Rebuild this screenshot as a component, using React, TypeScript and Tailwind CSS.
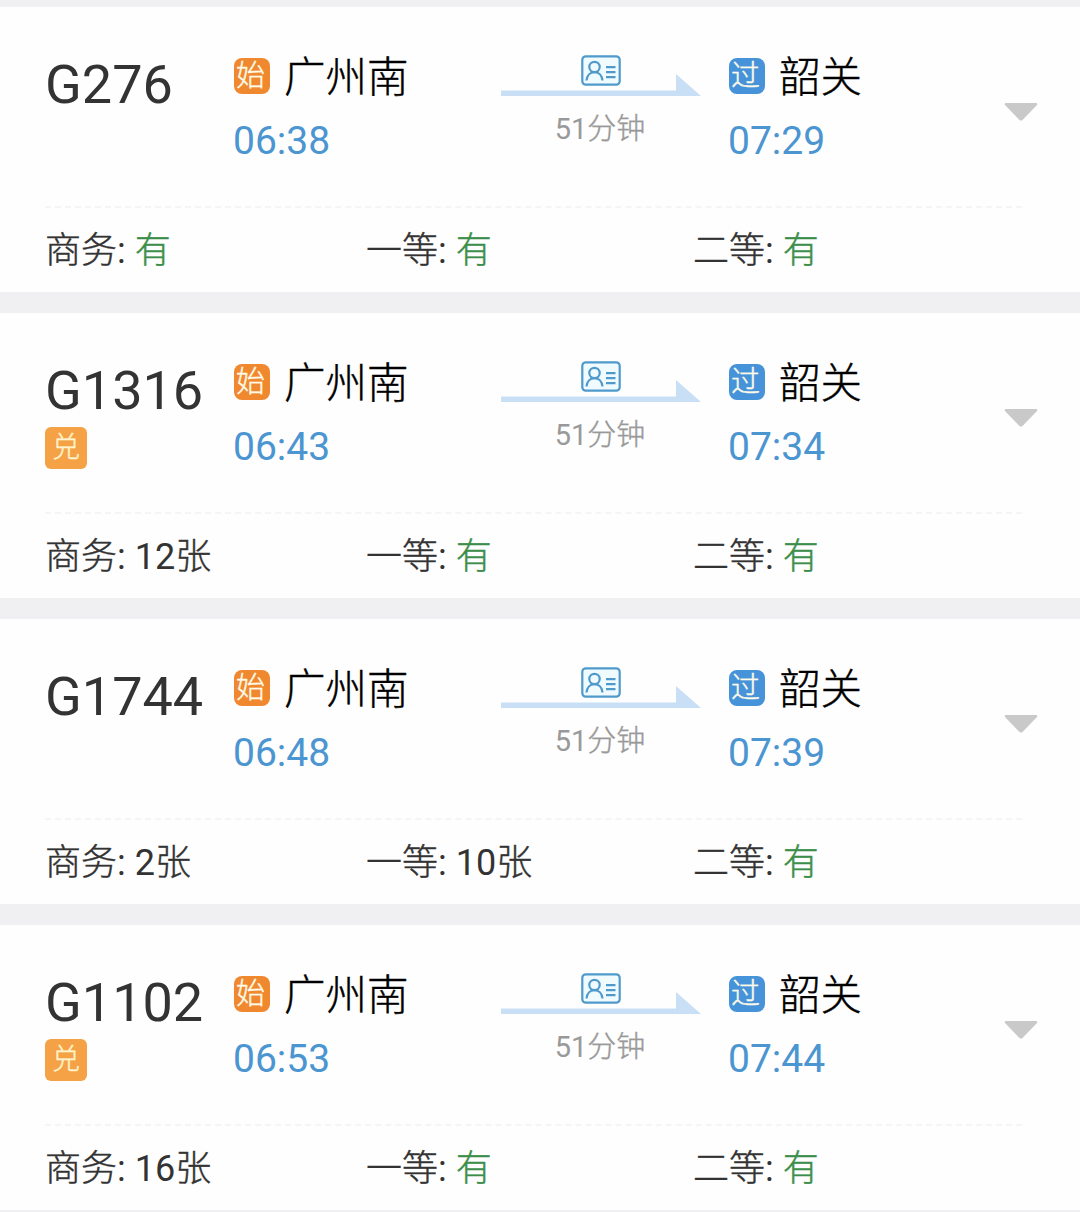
interface Train {
  code: string;
  redeemable?: boolean;
  depart: string;
  arrive: string;
  // number of tickets left, or "有" when there are plenty
  seats: [string, string, string];
}

const TRAINS: Train[] = [
  { code: "G276", depart: "06:38", arrive: "07:29", seats: ["有", "有", "有"] },
  { code: "G1316", redeemable: true, depart: "06:43", arrive: "07:34", seats: ["12", "有", "有"] },
  { code: "G1744", depart: "06:48", arrive: "07:39", seats: ["2", "10", "有"] },
  { code: "G1102", redeemable: true, depart: "06:53", arrive: "07:44", seats: ["16", "有", "有"] },
];

const SEAT_CLASSES = ["商务", "一等", "二等"];

// light Chinese glyphs, thickened a little so they sit well beside the digits
const CJK = "font-light [-webkit-text-stroke:0.4px_currentColor]";

interface StopProps {
  badge: string;
  badgeClass: string;
  name: string;
  time: string;
}

function Stop({ badge, badgeClass, name, time }: StopProps) {
  return (
    <div className="pt-[51px]">
      <div className="ml-px flex h-9 items-center">
        <span
          className={`flex h-9 w-9 shrink-0 justify-center rounded-[8px] pr-[3px] text-[29px] leading-[37px] text-[#fffbe8] ${CJK} ${badgeClass}`}
        >
          {badge}
        </span>
        <span className={`ml-[14px] pt-[3px] text-[41.5px] leading-[41px] text-black ${CJK}`}>{name}</span>
      </div>
      <div className="mt-[27px] text-[39px] leading-[40px] text-[#4b95d1]">{time}</div>
    </div>
  );
}

function IdCardIcon() {
  return (
    <svg className="ml-[2px]" width="40" height="31" viewBox="0 0 40 31" fill="none" stroke="#4f9acb" strokeWidth="2.2">
      <rect x="1.3" y="1.3" width="37.4" height="28.4" rx="3.5" fill="#f0fbff" />
      <circle cx="13.5" cy="12" r="5.2" />
      <path d="M5.5 25.5c.5-5 3.500-8.300 8-8.300s7.500 3.300 8 8.300" />
      <path d="M25 12.200h9.500M25 17.200h9.500M25 22.200h9.500" />
    </svg>
  );
}

function Journey() {
  return (
    <div className="flex flex-col items-center pt-[48px]">
      <IdCardIcon />
      <svg className="-mt-3 ml-[2px] h-[23px] w-[200px]" viewBox="0 0 200 23" fill="#c8dff6">
        <path d="M0 16.500H175V0L200 22H0Z" />
      </svg>
      <div className="mt-[17px] text-[29px] leading-[30px] text-[#999]">
        51<span className={CJK}>分钟</span>
      </div>
    </div>
  );
}

function Seat({ label, left }: { label: string; left: string }) {
  return (
    <div className="text-[36px] leading-[36px] whitespace-pre text-[#333]">
      <span className={CJK}>{label}</span>:{" "}
      {left === "有" ? (
        <span className={`text-[#3c8f4a] ${CJK}`}>有</span>
      ) : (
        <>
          {left}
          <span className={CJK}>张</span>
        </>
      )}
    </div>
  );
}

function TrainCard({ train }: { train: Train }) {
  return (
    <div className="h-[285px] bg-[#fefefe]">
      <div className="grid h-[199px] grid-cols-[188px_267px_200px_28px_276px_76px] pl-[45px]">
        <div className="pt-[51px]">
          <div className="text-[54px] leading-[54px] text-[#333]">{train.code}</div>
          {train.redeemable && (
            <div
              className={`mt-[9px] flex h-[42px] w-[42px] justify-center rounded-[6px] bg-[#f4a245] text-[28px] leading-[42px] text-[#fff3cc] ${CJK}`}
            >
              兑
            </div>
          )}
        </div>
        <Stop badge="始" badgeClass="bg-[#f0882f]" name="广州南" time={train.depart} />
        <Journey />
        <div />
        <Stop badge="过" badgeClass="bg-[#4793d9]" name="韶关" time={train.arrive} />
        <svg className="mt-[96px] h-[18px] w-[34px]" viewBox="0 0 34 18">
          <path d="M1.500 0H32.500Q34 1 32.500 2.500L18.500 17Q17 18 15.500 17L1.500 2.500Q0 1 1.500 0Z" fill="#c9c9c9" />
        </svg>
      </div>
      <div className="mr-[58px] ml-[45px] border-t-2 border-dashed border-[#f5f4f6]" />
      <div className="grid grid-cols-[321px_327px_1fr] pt-[25px] pl-[45px]">
        {SEAT_CLASSES.map((label, i) => (
          <Seat key={label} label={label} left={train.seats[i]} />
        ))}
      </div>
    </div>
  );
}

export default function App() {
  return (
    <div className="flex h-[1212px] w-[1080px] flex-col gap-[21px] overflow-hidden bg-[#f0eff1] pt-[7px] font-[Roboto,'Noto_Sans_CJK_SC',sans-serif]">
      {TRAINS.map((train) => (
        <TrainCard key={train.code} train={train} />
      ))}
    </div>
  );
}
